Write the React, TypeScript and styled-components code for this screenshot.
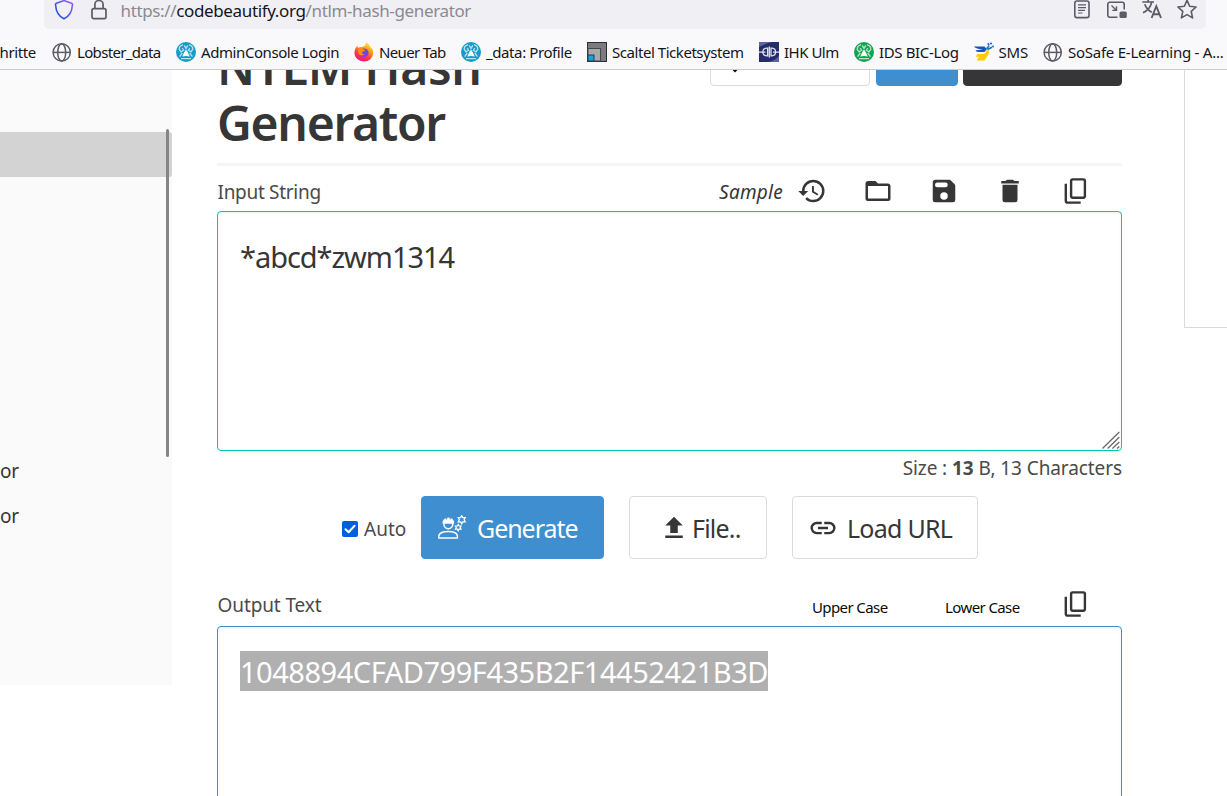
import React from "react";
import styled, { createGlobalStyle } from "styled-components";

const Global = createGlobalStyle`
  *, *::before, *::after { box-sizing: border-box; }
  html, body { margin: 0; padding: 0; background: #fff; overflow: hidden; }
  body { font-family: "Noto Sans", "Open Sans", sans-serif; color: #363636; }
  svg { display: block; flex: none; }
`;

const Page = styled.div`
  height: 796px;
  overflow: hidden;
  display: flex;
  flex-direction: column;
`;

/* Browser chrome */
const Chrome = styled.header`
  flex: none;
  height: 70px;
  background: #f9f9fb;
  border-bottom: 1px solid #ccc;
  overflow: hidden;
`;
const UrlBar = styled.div`
  height: 37px;
  margin: -8px 21px 0 44px;
  padding: 0 9px 0 10px;
  display: flex;
  align-items: center;
  background: #f0eff4;
  border-radius: 5px;
  font-size: 17px;
  letter-spacing: -0.36px;
  color: #8a8a90;
`;
const Url = styled.span`
  flex: 1;
  margin-left: 13.5px;
  padding-bottom: 1px;
  white-space: pre;
  b { font-weight: 400; color: #15141a; }
`;
const UrlIcons = styled.div<{ $gap: number }>`
  display: flex;
  gap: ${(p) => p.$gap}px;
  margin-top: -2px;
`;
const Bookmarks = styled.nav`
  height: 46px;
  display: flex;
  align-items: center;
`;
const Bookmark = styled.div<{ $width: number; $ls: number }>`
  flex: none;
  width: ${(p) => p.$width}px;
  display: flex;
  align-items: center;
  gap: 5px;
  font-size: 15px;
  line-height: 20px;
  letter-spacing: ${(p) => p.$ls}px;
  color: #15141a;
  white-space: nowrap;
`;
const CutBookmark = styled(Bookmark)`
  justify-content: flex-end;
  padding-right: 16px;
`;

/* Page content */
const Content = styled.div`
  flex: 1;
  min-height: 0;
  display: flex;
  align-items: flex-start;
  overflow: hidden;
`;
const Sidebar = styled.aside`
  position: relative;
  flex: none;
  width: 172px;
  height: 615px;
  padding-top: 62px;
  background: #fafafa;
`;
const SideItem = styled.div<{ $active?: boolean }>`
  height: 45px;
  padding-top: 2px;
  display: flex;
  align-items: center;
  font-size: 19px;
  letter-spacing: -0.3px;
  border-radius: 0 3px 3px 0;
  background: ${(p) => (p.$active ? "#d3d3d3" : "transparent")};
`;
const ScrollThumb = styled.div`
  position: absolute;
  top: 59px;
  right: 3px;
  width: 3px;
  height: 328px;
  border-radius: 2px;
  background: #858585;
`;
const Main = styled.main`
  flex: none;
  width: 905px;
  margin: -33px 0 0 45px;
`;
const TitleRow = styled.div`
  height: 129px;
  display: flex;
  justify-content: space-between;
  border-bottom: 3px solid #f5f5f5;
`;
const Title = styled.h1`
  margin: 0;
  padding-top: 2px;
  font-size: 48px;
  line-height: 56px;
  font-weight: 600;
  span { display: block; letter-spacing: -0.3px; }
  span + span { letter-spacing: -1.3px; }
`;
const Actions = styled.div`
  display: flex;
  padding-top: 9px;
`;
const Action = styled.div<{ $width: number; $bg: string; $border?: string; $gap?: number }>`
  width: ${(p) => p.$width}px;
  height: 40px;
  margin-left: ${(p) => p.$gap ?? 0}px;
  padding: 12px 0 0 16px;
  border: 1px solid ${(p) => p.$border ?? p.$bg};
  border-radius: 4px;
  background: ${(p) => p.$bg};
`;
const LabelRow = styled.div<{ $height: number; $top: number }>`
  height: ${(p) => p.$height}px;
  padding-top: ${(p) => p.$top}px;
  display: flex;
  align-items: center;
  color: #4a4a4a;
`;
const Label = styled.span<{ $ls: number }>`
  flex: 1;
  padding-left: 0.5px;
  font-size: 19px;
  letter-spacing: ${(p) => p.$ls}px;
`;
const Sample = styled.span`
  font-size: 19px;
  font-style: italic;
  letter-spacing: 0.25px;
  color: #363636;
  margin-right: 14px;
`;
const Tool = styled.span<{ $width?: number; $shift?: number }>`
  width: ${(p) => p.$width ?? 66}px;
  margin-top: ${(p) => p.$shift ?? -1}px;
  color: #363636;
`;
const CaseButton = styled.span<{ $width: number }>`
  width: ${(p) => p.$width}px;
  padding-top: 4px;
  font-size: 15px;
  letter-spacing: -0.6px;
  color: #0a0a0a;
`;
const TextBox = styled.div<{ $color: string }>`
  position: relative;
  height: 240px;
  padding: 24px 22px;
  border: 1px solid ${(p) => p.$color};
  border-radius: 4px;
  box-shadow: inset 0 1px 3px rgba(10, 10, 10, 0.06);
  font-size: 29px;
  line-height: 40px;
`;
const InputText = styled.div`
  padding-top: 1px;
  letter-spacing: -1.05px;
`;
const Selected = styled.span`
  display: inline-block;
  width: 528px;
  height: 40px;
  line-height: 42px;
  background: #b0b0b0;
  color: #fff;
  letter-spacing: -0.47px;
  white-space: nowrap;
`;
const Grip = styled.svg`
  position: absolute;
  right: 1px;
  bottom: 1px;
`;
const Size = styled.div`
  height: 33px;
  line-height: 35px;
  text-align: right;
  font-size: 19px;
  letter-spacing: -0.09px;
  color: #4a4a4a;
`;
const Controls = styled.div`
  display: flex;
  align-items: center;
  margin: 12px 0 0 125px;
`;
const CheckLabel = styled.div`
  width: 79px;
  display: flex;
  align-items: center;
  gap: 6px;
  padding-top: 3px;
  font-size: 19px;
  color: #4a4a4a;
`;
const Button = styled.div<{ $width: number; $pad: number; $gap: number; $ls: number; $primary?: boolean }>`
  width: ${(p) => p.$width}px;
  height: 63px;
  margin-right: 25px;
  padding-left: ${(p) => p.$pad}px;
  display: flex;
  align-items: center;
  gap: ${(p) => p.$gap}px;
  border: 1px solid ${(p) => (p.$primary ? "#3e8ed0" : "#dbdbdb")};
  border-radius: 4px;
  background: ${(p) => (p.$primary ? "#3e8ed0" : "#fff")};
  color: ${(p) => (p.$primary ? "#fff" : "#363636")};
  font-size: 25px;
  letter-spacing: ${(p) => p.$ls}px;
  white-space: nowrap;
`;
const AdPanel = styled.div`
  flex: none;
  width: 60px;
  height: 258px;
  margin-left: 62px;
  border: 1px solid #dbdbdb;
  border-top: 0;
`;

/* Icons */
const Mdi = ({ d }: { d: string }) => (
  <svg width="30" height="30" viewBox="0 0 24 24" fill="currentColor"><path d={d} /></svg>
);
const HISTORY = "M13.5,8H12V13L16.28,15.54L17,14.33L13.5,12.25V8M13,3A9,9 0 0,0 4,12H1L4.96,16.03L9,12H6A7,7 0 0,1 13,5A7,7 0 0,1 20,12A7,7 0 0,1 13,19C11.07,19 9.32,18.21 8.06,16.94L6.64,18.36C8.27,20 10.5,21 13,21A9,9 0 0,0 22,12A9,9 0 0,0 13,3";
const FOLDER = "M20,18H4V8H20M20,6H12L10,4H4C2.89,4 2,4.89 2,6V18A2,2 0 0,0 4,20H20A2,2 0 0,0 22,18V8C22,6.89 21.1,6 20,6Z";
const SAVE = "M13.2,9H6.6A1.8,1.9 0 0,1 6.6,5.2H13.2A1.8,1.9 0 0,1 13.2,9M12,19A3,3 0 0,1 9,16A3,3 0 0,1 12,13A3,3 0 0,1 15,16A3,3 0 0,1 12,19M16.4,3H5C3.89,3 3,3.9 3,5V19A2,2 0 0,0 5,21H19A2,2 0 0,0 21,19V7.6Q21,7 20.5,6.5L17.5,3.5Q17,3 16.4,3Z";
const TRASH = "M19,4H15.5L14.5,3H9.5L8.5,4H5V6H19M6,19A2,2 0 0,0 8,21H16A2,2 0 0,0 18,19V7H6V19Z";
const UPLOAD = "M9,16V10H5L12,3L19,10H15V16H9M5,20V18H19V20H5Z";
const LINK = "M3.9,12C3.9,10.29 5.29,8.9 7,8.9H11V7H7A5,5 0 0,0 2,12A5,5 0 0,0 7,17H11V15.1H7C5.29,15.1 3.9,13.71 3.9,12M8,13H16V11H8V13M17,7H13V8.9H17C18.71,8.9 20.1,10.29 20.1,12C20.1,13.71 18.71,15.1 17,15.1H13V17H17A5,5 0 0,0 22,12A5,5 0 0,0 17,7Z";

const CopyIcon = () => (
  <svg width="30" height="30" viewBox="0 0 30 30" fill="none" stroke="currentColor" strokeWidth="2.4">
    <rect x="10.1" y="3.4" width="13.8" height="18.3" rx="1.6" />
    <path d="M4.8 7.7V24.7Q4.8 26.6 6.7 26.6H19.7" />
  </svg>
);
const WorkerIcon = () => (
  <svg width="30" height="26" viewBox="438 515 30 26" fill="none" stroke="#fff" strokeWidth="1.5">
    <path d="M443.8 523.5a4.5 5.2 0 0 0 9 0" />
    <path d="M442.6 523.8V521.4Q443.6 518.6 446 518L446.6 520 447.6 517.6H449.2L450.2 520 450.8 518Q453.2 518.6 454.1 521.4V523.8Z" fill="#fff" stroke="none" />
    <path d="M438.8 537.9V536Q439.6 531.6 448.2 531.6T457.4 536V537.9Z" />
    <path d="M461.7 515.6 462.8 517.6 465.2 517.6 464.1 519.7 465.2 521.8 462.8 521.8 461.7 523.8 460.6 521.8 458.2 521.8 459.3 519.7 458.2 517.6 460.6 517.6Z" strokeWidth="1.3" />
    <path d="M458.2 524.4 459.1 526 461 526 460.1 527.6 461 529.2 459.1 529.2 458.2 530.8 457.3 529.2 455.4 529.2 456.3 527.6 455.4 526 457.3 526Z" strokeWidth="1.2" />
  </svg>
);
const Shield = () => (
  <svg width="20" height="20" viewBox="0 0 20 20" fill="none" strokeWidth="1.6" stroke="url(#shield)">
    <defs><linearGradient id="shield" x1="0" y1="1" x2="1" y2="0"><stop offset="0" stopColor="#0250d8" /><stop offset="1" stopColor="#a05cf8" /></linearGradient></defs>
    <path d="M10 .6 17.6 3.2Q18.8 3.7 18.4 5.2 17.8 15 10 18.8 2.2 15 1.6 5.2 1.2 3.7 2.4 3.2Z" />
  </svg>
);
const Lock = () => (
  <svg width="16" height="20" viewBox="0 0 16 20" fill="none" stroke="#5b5b66" strokeWidth="1.7">
    <rect x="1" y="8.6" width="14" height="10" rx="1.8" /><path d="M3.9 8.5V4.6a4.1 4.1 0 0 1 8.2 0v3.9" />
  </svg>
);
const Reader = () => (
  <svg width="20" height="20" viewBox="0 0 20 20" fill="none" stroke="#5b5b66" strokeWidth="1.6">
    <rect x="2.8" y="1" width="14.2" height="16.6" rx="2.2" /><path d="M6 4.8h8M6 7.6h8M6 10.4h7M6 13h4.5" strokeWidth="1.2" />
  </svg>
);
const Pip = () => (
  <svg width="20" height="20" viewBox="0 0 20 20" fill="none" stroke="#5b5b66" strokeWidth="1.6">
    <path d="M17.2 9.5V4.2a2 2 0 0 0-2-2H2.8a2 2 0 0 0-2 2v11a2 2 0 0 0 2 2H10.5" /><path d="M4.5 5.5 9 10M9.5 6.2v4.2H5.3" strokeWidth="1.4" />
    <rect x="12.5" y="11.5" width="7.3" height="6.5" rx="1.5" fill="#5b5b66" stroke="none" />
  </svg>
);
const Translate = () => (
  <svg width="20" height="20" viewBox="0 0 20 20" fill="none" stroke="#5b5b66" strokeWidth="1.7">
    <path d="M.3 2H12M6.1 0V2M2.8 4.2Q4.5 9.5 9.8 12.2M9.6 2.4Q8.2 9.5 1 12.8" /><path d="M9.6 18 14.3 6.2 19 18M11.2 14.2h6.3" strokeWidth="1.9" />
  </svg>
);
const Star = () => (
  <svg width="20" height="20" viewBox="0 0 20 20" fill="none" stroke="#5b5b66" strokeWidth="1.6" strokeLinejoin="round">
    <path d="M10 .2 12.6 6.3 19.1 7 14.2 11.4 15.6 17.9 10 14.6 4.4 17.9 5.8 11.4.9 7 7.4 6.3Z" />
  </svg>
);

const Globe = () => (
  <svg width="20" height="20" viewBox="0 0 20 20" fill="none" stroke="#5b5b66" strokeWidth="1.5">
    <circle cx="9.7" cy="10.4" r="8.6" /><ellipse cx="9.7" cy="10.4" rx="4" ry="8.6" /><path d="M1.1 10.4h17.2" />
  </svg>
);
const Lobster = ({ color }: { color: string }) => (
  <svg width="20" height="20" viewBox="0 0 20 20">
    <circle cx="10" cy="10" r="10" fill={color} />
    <g fill="none" stroke="#fff" strokeWidth="1.3" opacity=".7">
      <path d="M7 2.6Q3 4 3.2 7.2L5 9.8 7.6 8.2 6.2 6M13 2.6Q17 4 16.8 7.2L15 9.8 12.4 8.2 13.8 6M8.2 3.4 10 6.4l1.8-3M6.3 11 3.6 14.6M13.7 11l2.7 3.6M5 16.6h10" />
    </g>
    <path d="M10 7.6Q12 10 13.8 14.6L10 13.9 6.2 14.6Q8 10 10 7.6Z" fill="#fff" />
  </svg>
);
const Firefox = () => (
  <svg width="20" height="20" viewBox="0 0 20 20">
    <defs><linearGradient id="fox" x1=".8" y1="0" x2=".3" y2="1"><stop offset="0" stopColor="#fff44f" /><stop offset=".4" stopColor="#ff980e" /><stop offset=".7" stopColor="#ff3647" /><stop offset="1" stopColor="#e31587" /></linearGradient></defs>
    <path d="M12.5 0Q15.5 3 16.3 5 18.2 6 19 8.5 20 14 16.4 17.2 12.5 20.4 7 19 1 17 .4 11.2.2 7 3.3 3.5L4 6Q5.5 4.6 7.5 5 11.5 4.8 12.5 0Z" fill="url(#fox)" />
    <circle cx="10.3" cy="10.8" r="4.3" fill="#7542e5" />
    <path d="M4 6.8Q7 5.5 9 7.2L11.5 8Q10 10 8.2 9.8 7.5 12 10.5 12.3 8 14.5 5.5 12.8 3.2 10.5 4 6.8Z" fill="#ff8a16" />
  </svg>
);
const Scaltel = () => (
  <svg width="20" height="20" viewBox="0 0 20 20">
    <rect x=".5" y=".5" width="19" height="19" fill="#7c7c7e" stroke="#2b2d3b" />
    <rect x="1" y="6.5" width="12.5" height="12.5" fill="#a9a9ab" stroke="#44454d" />
    <rect x="1" y="13" width="6" height="6" fill="#19a2e0" stroke="#2b3b4b" />
  </svg>
);
const Ihk = () => (
  <svg width="20" height="20" viewBox="0 0 20 20">
    <rect width="20" height="20" fill="#252c6a" /><path d="M0 5Q8 1 13 0H0ZM20 14Q15 20 7 20H20Z" fill="#5c66a2" />
    <g fill="none" stroke="#dfe2f2" strokeWidth="1.3"><path d="M8.6 6.2H7.6Q3.8 6.5 3.8 10t3.8 3.8H8.6ZM12 6.2h1Q16.6 6.5 16.6 10t-3.6 3.8h-1ZM0 10.2h6.5M14 10.2h6M10.3 4.5v11" /></g>
  </svg>
);
const Sms = () => (
  <svg width="20" height="20" viewBox="0 0 20 20">
    <path d="M0 4.5H10.5L12.8 7.3 10.5 10H4.5Q1.8 9.8 1.5 8.2L9 7.7Q2 7 0 4.5Z" fill="#1456b8" />
    <path d="M12 8.5 14.5 8Q16 11 13 14.8L10.5 18.5H2.5L5 14.8H1.8L3.3 12H9.5Q12 11.5 12 8.5Z" fill="#ffcb05" />
    <path d="M12.5 6.8 15 4M13.5 7.5l4.5-2.2M14 1.2l1 2.2" stroke="#1670c5" strokeWidth="1.6" /><circle cx="17" cy="1.5" r="1.1" fill="#1670c5" /><circle cx="19" cy="4.4" r="1" fill="#1670c5" />
  </svg>
);

const bookmarks: { label: string; width: number; ls: number; icon: React.ReactNode }[] = [
  { label: "Lobster_data", width: 124, ls: -0.66, icon: <Globe /> },
  { label: "AdminConsole Login", width: 178, ls: -0.42, icon: <Lobster color="#149bc7" /> },
  { label: "Neuer Tab", width: 107, ls: -0.65, icon: <Firefox /> },
  { label: "_data: Profile", width: 126, ls: -0.4, icon: <Lobster color="#149bc7" /> },
  { label: "Scaltel Ticketsystem", width: 172, ls: -0.45, icon: <Scaltel /> },
  { label: "IHK Ulm", width: 95, ls: -0.5, icon: <Ihk /> },
  { label: "IDS BIC-Log", width: 119.5, ls: -0.36, icon: <Lobster color="#10a350" /> },
  { label: "SMS", width: 69.5, ls: -0.2, icon: <Sms /> },
  { label: "SoSafe E-Learning - A...", width: 183, ls: -0.25, icon: <Globe /> },
];
const sideItems = ["", "", "", "", "", "", "or", "or"];

export default function App() {
  return (
    <Page>
      <Global />
      <Chrome>
        <UrlBar>
          <UrlIcons $gap={17}><Shield /><Lock /></UrlIcons>
          <Url>https://<b>codebeautify.org</b>/ntlm-hash-generator</Url>
          <UrlIcons $gap={15}><Reader /><Pip /><Translate /><Star /></UrlIcons>
        </UrlBar>
        <Bookmarks>
          <CutBookmark $width={52} $ls={-0.35}>chritte</CutBookmark>
          {bookmarks.map((b) => (
            <Bookmark key={b.label} $width={b.width} $ls={b.ls}>{b.icon}{b.label}</Bookmark>
          ))}
        </Bookmarks>
      </Chrome>
      <Content>
        <Sidebar>
          <SideItem $active />
          {sideItems.map((t, i) => <SideItem key={i}>{t}</SideItem>)}
          <ScrollThumb />
        </Sidebar>
        <Main>
          <TitleRow>
            <Title><span>NTLM Hash</span><span>Generator</span></Title>
            <Actions>
              <Action $width={160} $bg="#fff" $border="#dbdbdb">
                <svg width="16" height="14" viewBox="0 0 16 14" fill="none" stroke="#0a0a0a" strokeWidth="2"><path d="M3 7l5 5 5-5" /></svg>
              </Action>
              <Action $width={82} $bg="#3e8ed0" $gap={6} />
              <Action $width={159} $bg="#363636" $gap={5} />
            </Actions>
          </TitleRow>
          <LabelRow $height={45} $top={6}>
            <Label $ls={-0.3}>Input String</Label>
            <Sample>Sample</Sample>
            <Tool><Mdi d={HISTORY} /></Tool>
            <Tool><Mdi d={FOLDER} /></Tool>
            <Tool><Mdi d={SAVE} /></Tool>
            <Tool><Mdi d={TRASH} /></Tool>
            <Tool $width={61}><CopyIcon /></Tool>
          </LabelRow>
          <TextBox $color="#00c9ad">
            <InputText>*abcd*zwm1314</InputText>
            <Grip width="18" height="18" viewBox="0 0 18 18" stroke="#6a6a6a" strokeWidth="1.3">
              <path d="M.5 17.5 17.3 1M5.7 17.5 17.3 6M10.4 17.5 17.3 11M15 17.5l2.3-2" />
            </Grip>
          </TextBox>
          <Size>Size : <b>13</b> B, 13 Characters</Size>
          <Controls>
            <CheckLabel>
              <svg width="16" height="16" viewBox="0 0 16 16"><rect width="16" height="16" rx="2" fill="#0060df" /><path d="M3.5 8.2 6.6 11.3 12.6 4.8" fill="none" stroke="#fff" strokeWidth="2" strokeLinecap="round" strokeLinejoin="round" /></svg>
              Auto
            </CheckLabel>
            <Button $primary $width={183} $pad={16} $gap={9} $ls={-1.05}><WorkerIcon />Generate</Button>
            <Button $width={138} $pad={29} $gap={3} $ls={-0.8}><Mdi d={UPLOAD} />File..</Button>
            <Button $width={186} $pad={15} $gap={9} $ls={-0.75}><Mdi d={LINK} />Load URL</Button>
          </Controls>
          <LabelRow $height={67} $top={24}>
            <Label $ls={-0.1}>Output Text</Label>
            <CaseButton $width={133}>Upper Case</CaseButton>
            <CaseButton $width={116}>Lower Case</CaseButton>
            <Tool $width={61} $shift={-1}><CopyIcon /></Tool>
          </LabelRow>
          <TextBox $color="#3e8ed0"><Selected>1048894CFAD799F435B2F14452421B3D</Selected></TextBox>
        </Main>
        <AdPanel />
      </Content>
    </Page>
  );
}
